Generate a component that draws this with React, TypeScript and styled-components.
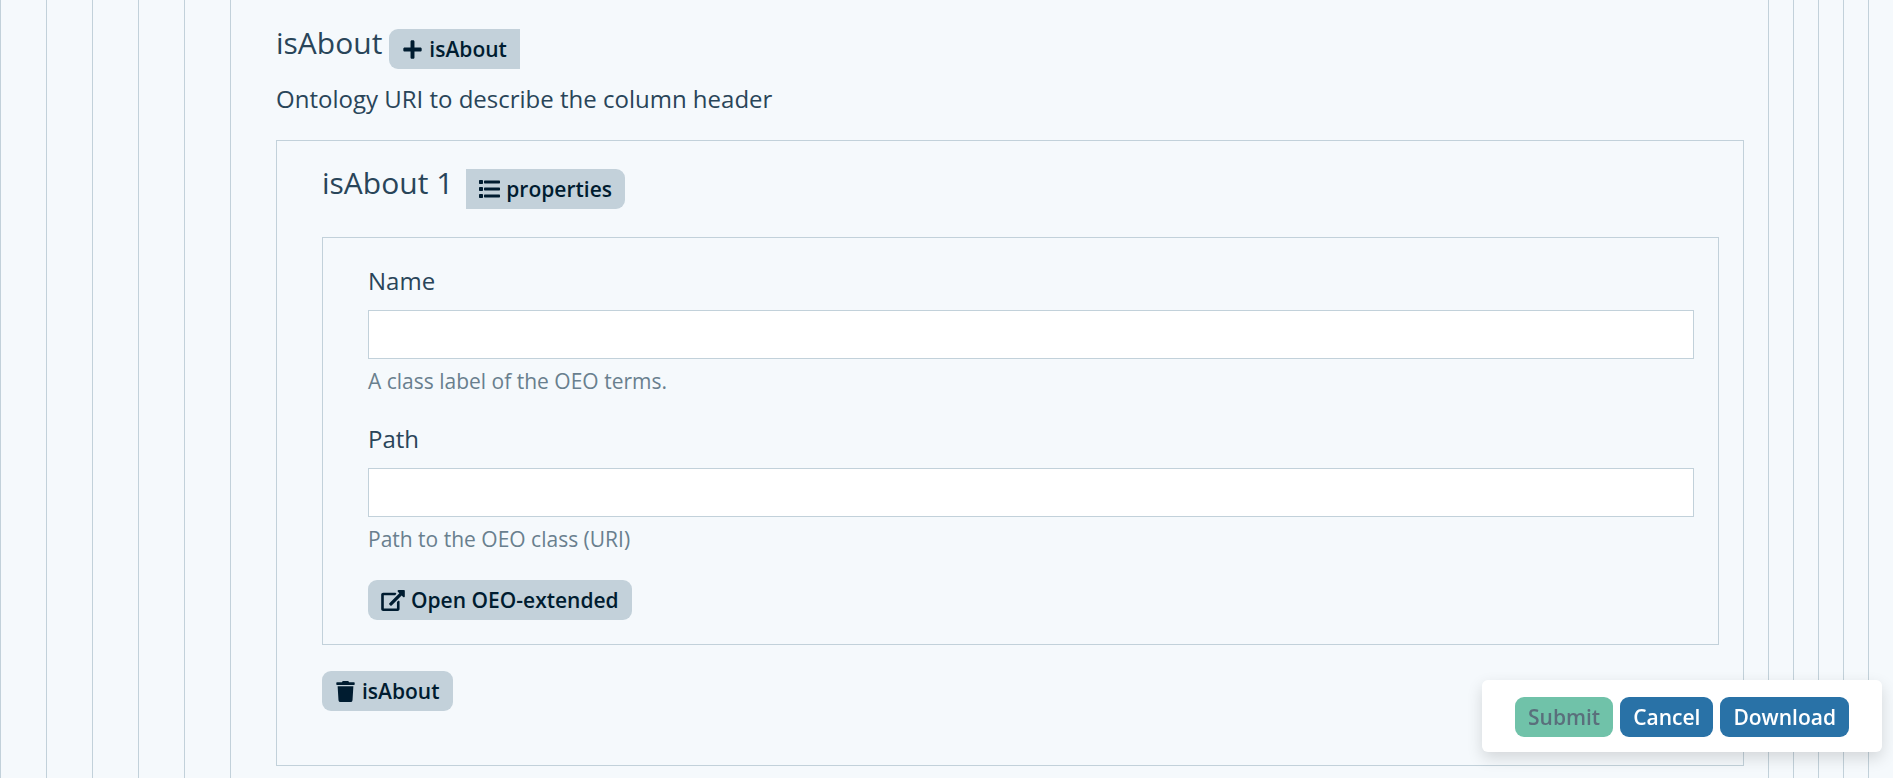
import React from "react";
import styled, { createGlobalStyle, css } from "styled-components";
import { FaPlus, FaTrash } from "react-icons/fa";

const GlobalStyle = createGlobalStyle`
  *, *::before, *::after { box-sizing: border-box; }
  body {
    margin: 0;
    background: #f5f9fc;
    color: #294559;
    font-family: "Open Sans", "Noto Sans", sans-serif;
    font-size: 24px;
    line-height: 36px;
  }
`;

const line = "1px solid #c2d1da";

const Level = styled.div<{ $outermost?: boolean }>`
  padding: 0 24px 0 45px;
  border-left: ${line};
  border-right: ${(p) => (p.$outermost ? "none" : line)};
`;

const Section = styled.section`
  display: flex;
  flex-direction: column;
  min-height: 100vh;
  padding: 27px 0 12px;
`;

const Panel = styled.div<{ $inner?: boolean }>`
  border: ${line};
  padding: ${(p) => (p.$inner ? "26px 24px 24px 45px" : "26px 24px 54px 45px")};
`;

const Header = styled.div<{ $gap: number }>`
  display: flex;
  align-items: center;
  gap: ${(p) => p.$gap}px;
`;

const Title = styled.h3`
  margin: 0;
  padding-bottom: 12px;
  font-size: 30px;
  font-weight: 400;
  line-height: 32px;
`;

const Description = styled.p`
  margin: 10px 0 23px;
`;

const Button = styled.button<{ $tone?: "primary" | "success"; $side?: "left" | "right" }>`
  display: flex;
  align-items: center;
  gap: 6px;
  height: 40px;
  padding: 0 13px;
  border: 0;
  border-radius: 9px;
  background: #c3d1da;
  color: #001c30;
  font: 600 21px/40px "Open Sans", "Noto Sans", sans-serif;
  ${(p) => p.$side === "left" && css`border-radius: 9px 0 0 9px;`}
  ${(p) => p.$side === "right" && css`border-radius: 0 9px 9px 0;`}
  ${(p) => p.$tone === "primary" && css`background: #2972a7; color: #fff;`}
  ${(p) => p.$tone === "success" && css`background: #70c2a9; color: #5a6f7c;`}
`;

const Properties = styled.div`
  margin: 26px 0;
`;

const Field = styled.div`
  display: flex;
  flex-direction: column;
  margin-bottom: 24px;
`;

const Label = styled.label`
  margin-bottom: 12px;
  line-height: 34px;
`;

const Input = styled.input`
  width: 100%;
  height: 49px;
  padding: 0 12px;
  border: ${line};
  border-radius: 0;
  background: #fff;
  font: inherit;
`;

const Help = styled.small`
  margin-top: 6px;
  color: #697f8e;
  font-size: 21px;
  line-height: 33px;
`;

const ActionBar = styled.div`
  position: fixed;
  right: 11px;
  bottom: 26px;
  display: flex;
  gap: 7px;
  padding: 17px 33px 15px;
  border-radius: 6px;
  background: #fff;
  box-shadow: 0 6px 16px rgba(0, 0, 0, 0.14);
`;

function ExternalLinkIcon() {
  return (
    <svg width="24" height="21" viewBox="0 0 576 512" fill="currentColor" aria-hidden="true">
      <path d="M576 24v127.984c0 21.461-25.96 31.98-40.971 16.971l-35.707-35.709-243.523 243.523c-9.373 9.373-24.568 9.373-33.941 0l-22.627-22.627c-9.373-9.373-9.373-24.569 0-33.941L442.756 76.676l-35.703-35.705C391.982 25.9 402.656 0 424.024 0H552c13.255 0 24 10.745 24 24zM407.029 270.794l-16 16A23.999 23.999 0 0 0 384 303.765V448H64V128h264a24.003 24.003 0 0 0 16.97-7.029l16-16C376.089 89.851 365.381 64 344 64H48C21.49 64 0 85.49 0 112v352c0 26.51 21.49 48 48 48h352c26.51 0 48-21.49 48-48V287.764c0-21.382-25.852-32.09-40.971-16.97z" />
    </svg>
  );
}

function ListIcon() {
  return (
    <svg width="21" height="18" viewBox="0 0 21 18" fill="currentColor" aria-hidden="true">
      {[0, 7, 14].map((y) => (
        <React.Fragment key={y}>
          <rect x="0" y={y} width="4" height="4" rx="0.7" />
          <rect x="5" y={y + 0.5} width="16" height="3" rx="0.7" />
        </React.Fragment>
      ))}
    </svg>
  );
}

const iconStyles = css`
  width: auto;
  height: 21px;
`;
const PlusIcon = styled(FaPlus)`${iconStyles}`;
const TrashIcon = styled(FaTrash)`${iconStyles}`;

function Nest({ depth, children }: { depth: number; children: React.ReactNode }) {
  let node = children;
  for (let i = depth; i > 0; i--) node = <Level $outermost={i === 1}>{node}</Level>;
  return <>{node}</>;
}

function TextField({ id, label, help }: { id: string; label: string; help: string }) {
  return (
    <Field>
      <Label htmlFor={id}>{label}</Label>
      <Input id={id} type="text" aria-describedby={`${id}-help`} />
      <Help id={`${id}-help`}>{help}</Help>
    </Field>
  );
}

export default function App() {
  return (
    <>
      <GlobalStyle />
      <Nest depth={6}>
        <Section>
          <Header $gap={7}>
            <Title>isAbout</Title>
            <Button type="button" $side="left"><PlusIcon />isAbout</Button>
          </Header>
          <Description>Ontology URI to describe the column header</Description>
          <Panel>
            <Header $gap={13}>
              <Title>isAbout 1</Title>
              <Button type="button" $side="right"><ListIcon />properties</Button>
            </Header>
            <Properties>
              <Panel $inner>
                <TextField id="name" label="Name" help="A class label of the OEO terms." />
                <TextField id="path" label="Path" help="Path to the OEO class (URI)" />
                <Button type="button"><ExternalLinkIcon />Open OEO-extended</Button>
              </Panel>
            </Properties>
            <Button type="button"><TrashIcon />isAbout</Button>
          </Panel>
        </Section>
      </Nest>
      <ActionBar>
        <Button type="submit" $tone="success" disabled>Submit</Button>
        <Button type="button" $tone="primary">Cancel</Button>
        <Button type="button" $tone="primary">Download</Button>
      </ActionBar>
    </>
  );
}
